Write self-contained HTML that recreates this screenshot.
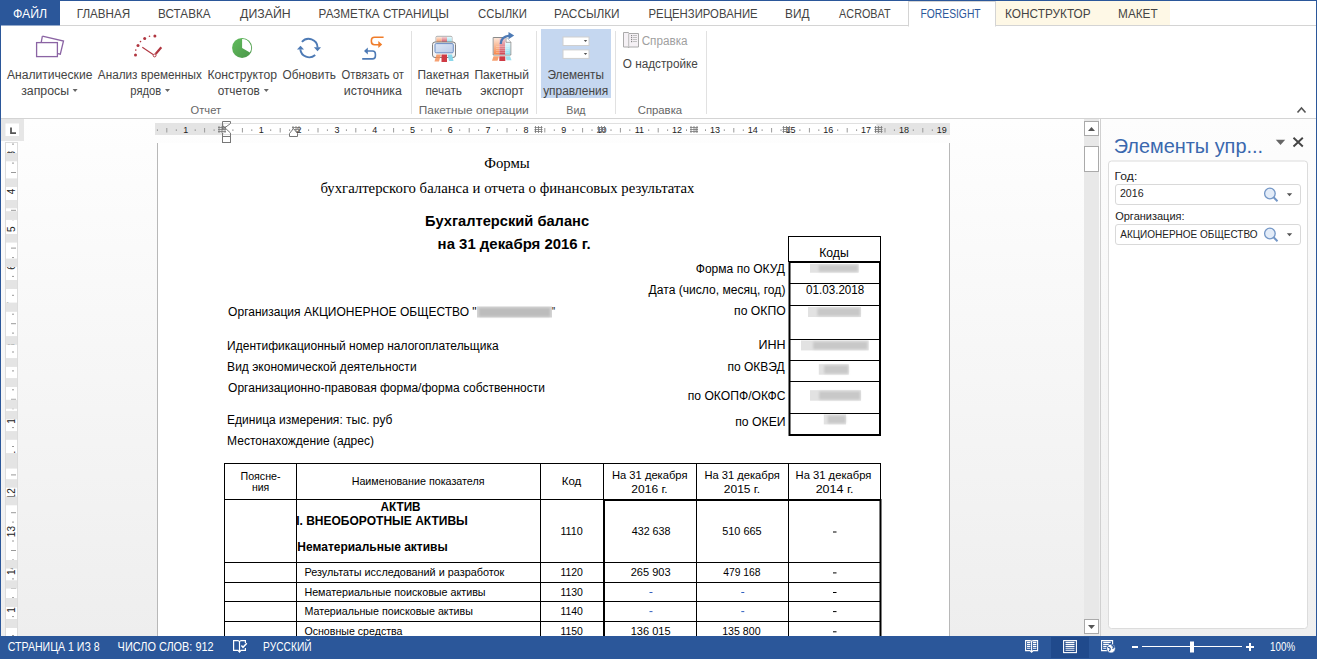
<!DOCTYPE html>
<html><head><meta charset="utf-8"><style>*{margin:0;padding:0}html,body{width:1317px;height:659px;overflow:hidden;background:#fff}svg{position:absolute;left:0;top:0;display:block}</style></head><body>
<svg width="1317" height="659" viewBox="0 0 1317 659">
<defs>
<linearGradient id="docg" x1="0" y1="0" x2="0" y2="1"><stop offset="0" stop-color="#fefefe"/><stop offset="1" stop-color="#eeeeee"/></linearGradient>
<linearGradient id="paneg" x1="0" y1="0" x2="0" y2="1"><stop offset="0" stop-color="#fdfdfd"/><stop offset="1" stop-color="#efefef"/></linearGradient>
<linearGradient id="pieg" x1="0" y1="0" x2="1" y2="1"><stop offset="0" stop-color="#62bd5e"/><stop offset="1" stop-color="#4a9548"/></linearGradient>
<linearGradient id="go" x1="0" y1="0" x2="0" y2="1"><stop offset="0" stop-color="#fde6d8"/><stop offset="1" stop-color="#f7874c"/></linearGradient>
<linearGradient id="gr" x1="0" y1="0" x2="0" y2="1"><stop offset="0" stop-color="#f2d0d3"/><stop offset="1" stop-color="#d04452"/></linearGradient>
<linearGradient id="gc" x1="0" y1="0" x2="0" y2="1"><stop offset="0" stop-color="#e4f9fd"/><stop offset="1" stop-color="#86dcf0"/></linearGradient>
<linearGradient id="gpan" x1="0" y1="0" x2="1" y2="1"><stop offset="0" stop-color="#dde7f6"/><stop offset="1" stop-color="#bccdea"/></linearGradient>
<filter id="blur" x="-20%" y="-50%" width="140%" height="200%"><feGaussianBlur stdDeviation="0.8"/></filter>
</defs>
<rect x="0" y="0" width="1317" height="659" fill="#fff"/>
<rect x="1" y="119" width="1099" height="517" fill="url(#docg)"/>
<rect x="1101" y="119" width="215" height="517" fill="url(#paneg)"/>
<rect x="0" y="0" width="60" height="25.5" fill="#2b579a"/>
<rect x="995" y="1" width="175" height="24" fill="#fef8e6"/>
<rect x="60" y="25" width="1256" height="1" fill="#d4d4d4"/>
<rect x="908.5" y="1.5" width="87" height="24.5" fill="#fff" stroke="#d4d4d4" stroke-width="1"/>
<rect x="909" y="25" width="86" height="2" fill="#fff"/>
<rect x="1" y="118" width="1315" height="1" fill="#d4d4d4"/>
<rect x="411.0" y="31" width="1" height="83" fill="#e1e1e1"/>
<rect x="536.0" y="31" width="1" height="83" fill="#e1e1e1"/>
<rect x="615.0" y="31" width="1" height="83" fill="#e1e1e1"/>
<rect x="706.0" y="31" width="1" height="83" fill="#e1e1e1"/>
<rect x="541" y="29" width="70" height="69" fill="#c5d7f0"/>
<path d="M72.6 89h5l-2.5 3z" fill="#666"/>
<path d="M165 89h5l-2.5 3z" fill="#666"/>
<path d="M263.8 89h5l-2.5 3z" fill="#666"/>
<path d="M1297.5 112.5l4-4.5 4 4.5" fill="none" stroke="#555" stroke-width="1.6"/>
<path d="M42.4 36.2 L63.5 41 L60.3 54.2 L57.8 53.6" fill="none" stroke="#8b64a4" stroke-width="1.3"/>
<path d="M41.2 42.6 L42.4 36.2" fill="none" stroke="#8b64a4" stroke-width="1.3"/>
<rect x="36.6" y="42.6" width="20.8" height="14" fill="#fff" stroke="#8b64a4" stroke-width="1.3"/>
<circle cx="135.5" cy="55.1" r="1.5" fill="#b0353f"/>
<circle cx="135.8" cy="50.1" r="0.8" fill="#b0353f"/>
<circle cx="138" cy="45.6" r="1.5" fill="#b0353f"/>
<circle cx="140.5" cy="41.6" r="0.8" fill="#b0353f"/>
<circle cx="144.7" cy="38.6" r="1.5" fill="#b0353f"/>
<circle cx="149.5" cy="36.3" r="0.8" fill="#b0353f"/>
<circle cx="154.9" cy="35.9" r="1.5" fill="#b0353f"/>
<path d="M142.3 47.2 L153.5 54.7" stroke="#b0353f" stroke-width="1.1" fill="none"/>
<path d="M155.6 54 L161.3 47.3" stroke="#b0353f" stroke-width="2.2" fill="none"/>
<circle cx="154.6" cy="55.5" r="1.4" fill="#fff" stroke="#b0353f" stroke-width="1"/>
<circle cx="242.1" cy="47.9" r="10" fill="url(#pieg)"/>
<path d="M242.1 47.9 L242.1 38.9 A9 9 0 0 1 249.9 52.4 Z" fill="#fff"/>
<path d="M301.9 41.9 A9 9 0 0 1 317.6 47.5" fill="none" stroke="#4d7ab5" stroke-width="1.9"/>
<path d="M313.9 47.3 L321 47.3 L317.5 51.3Z" fill="#4d7ab5"/>
<path d="M315.2 55 A9 9 0 0 1 300.3 49.3" fill="none" stroke="#4d7ab5" stroke-width="1.9"/>
<path d="M297 49.4 L304 49.4 L300.5 45.8Z" fill="#4d7ab5"/>
<path d="M383.6 37.2 H374.5 Q371.4 37.2 371.4 40.3 V41.6 Q371.4 44.7 374.5 44.7 H379" fill="none" stroke="#f07d2a" stroke-width="1.6"/>
<path d="M378.3 41 L382.2 44.6 L378.3 48Z" fill="#f07d2a"/>
<path d="M362.2 58.9 H372.5 Q375.4 58.9 375.4 56 V54 Q375.4 51 372.5 51 H367" fill="none" stroke="#4d7ab5" stroke-width="1.6"/>
<path d="M367.8 47.6 L364 51 L367.8 54.6Z" fill="#4d7ab5"/>
<rect x="436" y="36.3" width="16" height="7" rx="1" fill="#fff" stroke="#999" stroke-width=".8"/>
<rect x="436.5" y="37" width="5" height="6" fill="url(#go)"/><rect x="441.5" y="37" width="5.5" height="6" fill="url(#gr)"/><rect x="447" y="37" width="4.6" height="6" fill="url(#gc)"/>
<rect x="432.5" y="42" width="23" height="15.5" rx="2.5" fill="#f4f4f4" stroke="#808080" stroke-width="1"/>
<rect x="435" y="43.6" width="18.3" height="9.2" rx="1.2" fill="url(#gpan)" stroke="#6c8dc3" stroke-width="1"/>
<path d="M436.5 54.5h4.5l-2 7h-4.5z" fill="#f5915a" opacity=".85"/><rect x="441.5" y="54.5" width="5.5" height="7.5" fill="#cf3b45"/><path d="M447.5 54.5h4.5l1.5 6.5h-4.5z" fill="#8ad7ea"/>
<path d="M493.2 37.5 H506 L510.8 42.3 V55 H493.2Z" fill="#fff" stroke="#8a8a8a" stroke-width="1"/>
<rect x="493.8" y="38" width="5.5" height="16.5" fill="url(#go)"/><rect x="499.3" y="38" width="6" height="16.5" fill="url(#gr)"/><rect x="505.3" y="43" width="5" height="11.5" fill="url(#gc)"/>
<path d="M496 46.5h13M496 48.5h13M496 50.5h13M496 52.5h13" stroke="#fff" stroke-opacity=".35" stroke-width=".7"/>
<path d="M506 37.5 V42.3 H510.8" fill="#fff" stroke="#8a8a8a" stroke-width=".8"/>
<path d="M500.7 44 Q501 36.3 509.5 35.6" fill="none" stroke="#4d7ab5" stroke-width="2.2"/>
<path d="M508.5 32 L514.2 35.6 L508.5 39.2Z" fill="#4d7ab5"/>
<path d="M493.5 56.3h5.5l-1.5 4.5h-5.5z" fill="#f6a070"/><rect x="499.3" y="56.3" width="6" height="4.7" fill="#cf3b45"/><path d="M505.5 56.3h4.5l1.5 4h-5z" fill="#9fe0ef"/>
<rect x="563" y="37.0" width="26" height="8.5" fill="#fff" stroke="#cfcfcf" stroke-width="1"/>
<path d="M583.8 40.1h3.4l-1.7 2z" fill="#555"/>
<rect x="563" y="49.9" width="26" height="8.5" fill="#fff" stroke="#cfcfcf" stroke-width="1"/>
<path d="M583.8 53.0h3.4l-1.7 2z" fill="#555"/>
<path d="M623.5 32.5 H628.5 L629 33.5 H638.5 V47 H629 L628.6 47.8 L628 47 H623.5Z" fill="#f5f1f5" stroke="#aaa" stroke-width="1"/>
<path d="M628.7 33.5 V47" stroke="#bbb" stroke-width="1"/>
<rect x="631" y="35.0" width="1.2" height="1.2" fill="#888"/><rect x="633" y="35.1" width="4" height=".9" fill="#bbb"/>
<rect x="631" y="37.0" width="1.2" height="1.2" fill="#888"/><rect x="633" y="37.1" width="4" height=".9" fill="#bbb"/>
<rect x="631" y="39.0" width="1.2" height="1.2" fill="#888"/><rect x="633" y="39.1" width="4" height=".9" fill="#bbb"/>
<rect x="631" y="41.0" width="1.2" height="1.2" fill="#888"/><rect x="633" y="41.1" width="4" height=".9" fill="#bbb"/>
<rect x="1" y="119" width="23" height="22" fill="#e6e6e6"/>
<rect x="5.5" y="123.5" width="13.5" height="12.5" fill="#fff"/>
<path d="M11 127.5 V133.2 H16" fill="none" stroke="#555" stroke-width="1.8"/>
<rect x="155" y="123" width="795" height="12" fill="#e4e4e4"/>
<rect x="223.5" y="123.5" width="653.5" height="11" fill="#fff" stroke="#e0e0e0" stroke-width="1"/>
<rect x="156.9" y="129.3" width="1" height="1.7" fill="#999"/>
<rect x="166.3" y="128" width="1" height="4.5" fill="#999"/>
<rect x="175.8" y="129.3" width="1" height="1.7" fill="#999"/>
<rect x="194.7" y="129.3" width="1" height="1.7" fill="#999"/>
<rect x="204.1" y="128" width="1" height="4.5" fill="#999"/>
<rect x="213.6" y="129.3" width="1" height="1.7" fill="#999"/>
<rect x="232.4" y="129.3" width="1" height="1.7" fill="#999"/>
<rect x="241.9" y="128" width="1" height="4.5" fill="#999"/>
<rect x="251.3" y="129.3" width="1" height="1.7" fill="#999"/>
<rect x="270.2" y="129.3" width="1" height="1.7" fill="#999"/>
<rect x="279.7" y="128" width="1" height="4.5" fill="#999"/>
<rect x="289.1" y="129.3" width="1" height="1.7" fill="#999"/>
<rect x="308.1" y="129.3" width="1" height="1.7" fill="#999"/>
<rect x="317.5" y="128" width="1" height="4.5" fill="#999"/>
<rect x="326.9" y="129.3" width="1" height="1.7" fill="#999"/>
<rect x="345.9" y="129.3" width="1" height="1.7" fill="#999"/>
<rect x="355.3" y="128" width="1" height="4.5" fill="#999"/>
<rect x="364.8" y="129.3" width="1" height="1.7" fill="#999"/>
<rect x="383.6" y="129.3" width="1" height="1.7" fill="#999"/>
<rect x="393.1" y="128" width="1" height="4.5" fill="#999"/>
<rect x="402.5" y="129.3" width="1" height="1.7" fill="#999"/>
<rect x="421.4" y="129.3" width="1" height="1.7" fill="#999"/>
<rect x="430.9" y="128" width="1" height="4.5" fill="#999"/>
<rect x="440.4" y="129.3" width="1" height="1.7" fill="#999"/>
<rect x="459.2" y="129.3" width="1" height="1.7" fill="#999"/>
<rect x="468.7" y="128" width="1" height="4.5" fill="#999"/>
<rect x="478.1" y="129.3" width="1" height="1.7" fill="#999"/>
<rect x="497.0" y="129.3" width="1" height="1.7" fill="#999"/>
<rect x="506.5" y="128" width="1" height="4.5" fill="#999"/>
<rect x="516.0" y="129.3" width="1" height="1.7" fill="#999"/>
<rect x="534.8" y="129.3" width="1" height="1.7" fill="#999"/>
<rect x="544.3" y="128" width="1" height="4.5" fill="#999"/>
<rect x="553.8" y="129.3" width="1" height="1.7" fill="#999"/>
<rect x="572.6" y="129.3" width="1" height="1.7" fill="#999"/>
<rect x="582.1" y="128" width="1" height="4.5" fill="#999"/>
<rect x="591.5" y="129.3" width="1" height="1.7" fill="#999"/>
<rect x="610.5" y="129.3" width="1" height="1.7" fill="#999"/>
<rect x="619.9" y="128" width="1" height="4.5" fill="#999"/>
<rect x="629.3" y="129.3" width="1" height="1.7" fill="#999"/>
<rect x="648.2" y="129.3" width="1" height="1.7" fill="#999"/>
<rect x="657.7" y="128" width="1" height="4.5" fill="#999"/>
<rect x="667.1" y="129.3" width="1" height="1.7" fill="#999"/>
<rect x="686.0" y="129.3" width="1" height="1.7" fill="#999"/>
<rect x="695.5" y="128" width="1" height="4.5" fill="#999"/>
<rect x="705.0" y="129.3" width="1" height="1.7" fill="#999"/>
<rect x="723.8" y="129.3" width="1" height="1.7" fill="#999"/>
<rect x="733.3" y="128" width="1" height="4.5" fill="#999"/>
<rect x="742.8" y="129.3" width="1" height="1.7" fill="#999"/>
<rect x="761.6" y="129.3" width="1" height="1.7" fill="#999"/>
<rect x="771.1" y="128" width="1" height="4.5" fill="#999"/>
<rect x="780.5" y="129.3" width="1" height="1.7" fill="#999"/>
<rect x="799.4" y="129.3" width="1" height="1.7" fill="#999"/>
<rect x="808.9" y="128" width="1" height="4.5" fill="#999"/>
<rect x="818.3" y="129.3" width="1" height="1.7" fill="#999"/>
<rect x="837.2" y="129.3" width="1" height="1.7" fill="#999"/>
<rect x="846.7" y="128" width="1" height="4.5" fill="#999"/>
<rect x="856.1" y="129.3" width="1" height="1.7" fill="#999"/>
<rect x="875.0" y="129.3" width="1" height="1.7" fill="#999"/>
<rect x="884.5" y="128" width="1" height="4.5" fill="#999"/>
<rect x="893.9" y="129.3" width="1" height="1.7" fill="#999"/>
<rect x="912.8" y="129.3" width="1" height="1.7" fill="#999"/>
<rect x="922.3" y="128" width="1" height="4.5" fill="#999"/>
<rect x="931.8" y="129.3" width="1" height="1.7" fill="#999"/>
<text x="261.3" y="132.8" text-anchor="middle" style="font-family:'Liberation Sans';font-size:9px" fill="#222">1</text>
<text x="299.1" y="132.8" text-anchor="middle" style="font-family:'Liberation Sans';font-size:9px" fill="#222">2</text>
<text x="336.9" y="132.8" text-anchor="middle" style="font-family:'Liberation Sans';font-size:9px" fill="#222">3</text>
<text x="374.7" y="132.8" text-anchor="middle" style="font-family:'Liberation Sans';font-size:9px" fill="#222">4</text>
<text x="412.5" y="132.8" text-anchor="middle" style="font-family:'Liberation Sans';font-size:9px" fill="#222">5</text>
<text x="450.3" y="132.8" text-anchor="middle" style="font-family:'Liberation Sans';font-size:9px" fill="#222">6</text>
<text x="488.1" y="132.8" text-anchor="middle" style="font-family:'Liberation Sans';font-size:9px" fill="#222">7</text>
<text x="525.9" y="132.8" text-anchor="middle" style="font-family:'Liberation Sans';font-size:9px" fill="#222">8</text>
<text x="563.7" y="132.8" text-anchor="middle" style="font-family:'Liberation Sans';font-size:9px" fill="#222">9</text>
<text x="601.5" y="132.8" text-anchor="middle" style="font-family:'Liberation Sans';font-size:9px" fill="#222">10</text>
<text x="639.3" y="132.8" text-anchor="middle" style="font-family:'Liberation Sans';font-size:9px" fill="#222">11</text>
<text x="677.1" y="132.8" text-anchor="middle" style="font-family:'Liberation Sans';font-size:9px" fill="#222">12</text>
<text x="714.9" y="132.8" text-anchor="middle" style="font-family:'Liberation Sans';font-size:9px" fill="#222">13</text>
<text x="752.7" y="132.8" text-anchor="middle" style="font-family:'Liberation Sans';font-size:9px" fill="#222">14</text>
<text x="790.5" y="132.8" text-anchor="middle" style="font-family:'Liberation Sans';font-size:9px" fill="#222">15</text>
<text x="828.3" y="132.8" text-anchor="middle" style="font-family:'Liberation Sans';font-size:9px" fill="#222">16</text>
<text x="866.1" y="132.8" text-anchor="middle" style="font-family:'Liberation Sans';font-size:9px" fill="#222">17</text>
<text x="903.9" y="132.8" text-anchor="middle" style="font-family:'Liberation Sans';font-size:9px" fill="#222">18</text>
<text x="941.7" y="132.8" text-anchor="middle" style="font-family:'Liberation Sans';font-size:9px" fill="#222">19</text>
<text x="185.7" y="132.8" text-anchor="middle" style="font-family:'Liberation Sans';font-size:9px" fill="#222">1</text>
<g fill="none" stroke="#777" stroke-width=".8"><path d="M219 126v7M222 126v7M225 126v7M218 127.5h8M218 129.5h8M218 131.5h8"/></g>
<g fill="none" stroke="#777" stroke-width=".8"><path d="M293 126v7M296 126v7M299 126v7M292 127.5h8M292 129.5h8M292 131.5h8"/></g>
<g fill="none" stroke="#777" stroke-width=".8"><path d="M535.5 126v7M538.5 126v7M541.5 126v7M534.5 127.5h8M534.5 129.5h8M534.5 131.5h8"/></g>
<g fill="none" stroke="#777" stroke-width=".8"><path d="M598.5 126v7M601.5 126v7M604.5 126v7M597.5 127.5h8M597.5 129.5h8M597.5 131.5h8"/></g>
<g fill="none" stroke="#777" stroke-width=".8"><path d="M691 126v7M694 126v7M697 126v7M690 127.5h8M690 129.5h8M690 131.5h8"/></g>
<g fill="none" stroke="#777" stroke-width=".8"><path d="M783.5 126v7M786.5 126v7M789.5 126v7M782.5 127.5h8M782.5 129.5h8M782.5 131.5h8"/></g>
<g fill="none" stroke="#777" stroke-width=".8"><path d="M875.5 126v7M878.5 126v7M881.5 126v7M874.5 127.5h8M874.5 129.5h8M874.5 131.5h8"/></g>
<path d="M222.5 121.5 H230.5 V123.5 L222.5 129.5 Z" fill="none" stroke="#777" stroke-width="1"/>
<path d="M222.5 125.5 L230.5 133 V136.5 H222.5 V133" fill="none" stroke="#777" stroke-width="1"/>
<rect x="222.5" y="136.5" width="8" height="6" fill="#fff" stroke="#777" stroke-width="1"/>
<path d="M293.5 128.5 L297.5 133.5 V136.5 H289.5 V133.5Z" fill="#fff" stroke="#777" stroke-width="1"/>
<rect x="5.5" y="142.5" width="12" height="494" fill="#e4e4e4" stroke="#dcdcdc" stroke-width="1"/>
<rect x="6" y="143.0" width="11" height="10.0" fill="#fff"/>
<rect x="6" y="161.3" width="11" height="17.1" fill="#fff"/>
<rect x="6" y="187.0" width="11" height="13.0" fill="#fff"/>
<rect x="6" y="208.3" width="11" height="2.9" fill="#fff"/>
<rect x="6" y="219.9" width="11" height="14.1" fill="#fff"/>
<rect x="6" y="242.6" width="11" height="16.0" fill="#fff"/>
<rect x="6" y="266.9" width="11" height="13.1" fill="#fff"/>
<rect x="6" y="289.0" width="11" height="13.6" fill="#fff"/>
<rect x="6" y="311.8" width="11" height="24.3" fill="#fff"/>
<rect x="6" y="344.8" width="11" height="13.3" fill="#fff"/>
<rect x="6" y="366.9" width="11" height="11.2" fill="#fff"/>
<rect x="6" y="387.0" width="11" height="12.8" fill="#fff"/>
<rect x="6" y="408.8" width="11" height="2.1" fill="#fff"/>
<rect x="6" y="419.4" width="11" height="11.7" fill="#fff"/>
<rect x="6" y="439.8" width="11" height="13.3" fill="#fff"/>
<rect x="6" y="468.6" width="11" height="10.6" fill="#fff"/>
<rect x="6" y="487.7" width="11" height="8.8" fill="#fff"/>
<rect x="6" y="505.3" width="11" height="54.7" fill="#fff"/>
<rect x="6" y="568.6" width="11" height="11.7" fill="#fff"/>
<rect x="6" y="588.6" width="11" height="9.4" fill="#fff"/>
<rect x="6" y="607.0" width="11" height="12.0" fill="#fff"/>
<rect x="6" y="628.0" width="11" height="8.0" fill="#fff"/>
<clipPath id="vclip"><rect x="6" y="143.0" width="11" height="10.0"/><rect x="6" y="161.3" width="11" height="17.1"/><rect x="6" y="187.0" width="11" height="13.0"/><rect x="6" y="208.3" width="11" height="2.9"/><rect x="6" y="219.9" width="11" height="14.1"/><rect x="6" y="242.6" width="11" height="16.0"/><rect x="6" y="266.9" width="11" height="13.1"/><rect x="6" y="289.0" width="11" height="13.6"/><rect x="6" y="311.8" width="11" height="24.3"/><rect x="6" y="344.8" width="11" height="13.3"/><rect x="6" y="366.9" width="11" height="11.2"/><rect x="6" y="387.0" width="11" height="12.8"/><rect x="6" y="408.8" width="11" height="2.1"/><rect x="6" y="419.4" width="11" height="11.7"/><rect x="6" y="439.8" width="11" height="13.3"/><rect x="6" y="468.6" width="11" height="10.6"/><rect x="6" y="487.7" width="11" height="8.8"/><rect x="6" y="505.3" width="11" height="54.7"/><rect x="6" y="568.6" width="11" height="11.7"/><rect x="6" y="588.6" width="11" height="9.4"/><rect x="6" y="607.0" width="11" height="12.0"/><rect x="6" y="628.0" width="11" height="8.0"/></clipPath>
<g clip-path="url(#vclip)"><rect x="12" y="143.6" width="2" height="1" fill="#999"/><text x="11.7" y="153.6" transform="rotate(-90 11.7 153.6)" text-anchor="middle" dominant-baseline="central" style="font-family:'Liberation Sans';font-size:10px" fill="#222">3</text><rect x="12" y="162.6" width="2" height="1" fill="#999"/><rect x="11" y="172.0" width="5" height="1" fill="#999"/><rect x="12" y="181.4" width="2" height="1" fill="#999"/><text x="11.7" y="191.4" transform="rotate(-90 11.7 191.4)" text-anchor="middle" dominant-baseline="central" style="font-family:'Liberation Sans';font-size:10px" fill="#222">4</text><rect x="12" y="200.3" width="2" height="1" fill="#999"/><rect x="11" y="209.8" width="5" height="1" fill="#999"/><rect x="12" y="219.2" width="2" height="1" fill="#999"/><text x="11.7" y="229.2" transform="rotate(-90 11.7 229.2)" text-anchor="middle" dominant-baseline="central" style="font-family:'Liberation Sans';font-size:10px" fill="#222">5</text><rect x="12" y="238.1" width="2" height="1" fill="#999"/><rect x="11" y="247.6" width="5" height="1" fill="#999"/><rect x="12" y="257.1" width="2" height="1" fill="#999"/><text x="11.7" y="267.0" transform="rotate(-90 11.7 267.0)" text-anchor="middle" dominant-baseline="central" style="font-family:'Liberation Sans';font-size:10px" fill="#222">6</text><rect x="12" y="275.9" width="2" height="1" fill="#999"/><rect x="11" y="285.4" width="5" height="1" fill="#999"/><rect x="12" y="294.8" width="2" height="1" fill="#999"/><text x="11.7" y="304.8" transform="rotate(-90 11.7 304.8)" text-anchor="middle" dominant-baseline="central" style="font-family:'Liberation Sans';font-size:10px" fill="#222">7</text><rect x="12" y="313.7" width="2" height="1" fill="#999"/><rect x="11" y="323.2" width="5" height="1" fill="#999"/><rect x="12" y="332.6" width="2" height="1" fill="#999"/><text x="11.7" y="342.6" transform="rotate(-90 11.7 342.6)" text-anchor="middle" dominant-baseline="central" style="font-family:'Liberation Sans';font-size:10px" fill="#222">8</text><rect x="12" y="351.5" width="2" height="1" fill="#999"/><rect x="11" y="361.0" width="5" height="1" fill="#999"/><rect x="12" y="370.4" width="2" height="1" fill="#999"/><text x="11.7" y="380.4" transform="rotate(-90 11.7 380.4)" text-anchor="middle" dominant-baseline="central" style="font-family:'Liberation Sans';font-size:10px" fill="#222">9</text><rect x="12" y="389.3" width="2" height="1" fill="#999"/><rect x="11" y="398.8" width="5" height="1" fill="#999"/><rect x="12" y="408.2" width="2" height="1" fill="#999"/><text x="11.7" y="418.2" transform="rotate(-90 11.7 418.2)" text-anchor="middle" dominant-baseline="central" style="font-family:'Liberation Sans';font-size:10px" fill="#222">10</text><rect x="12" y="427.1" width="2" height="1" fill="#999"/><rect x="11" y="436.6" width="5" height="1" fill="#999"/><rect x="12" y="446.0" width="2" height="1" fill="#999"/><text x="11.7" y="456.0" transform="rotate(-90 11.7 456.0)" text-anchor="middle" dominant-baseline="central" style="font-family:'Liberation Sans';font-size:10px" fill="#222">11</text><rect x="12" y="464.9" width="2" height="1" fill="#999"/><rect x="11" y="474.4" width="5" height="1" fill="#999"/><rect x="12" y="483.8" width="2" height="1" fill="#999"/><text x="11.7" y="493.8" transform="rotate(-90 11.7 493.8)" text-anchor="middle" dominant-baseline="central" style="font-family:'Liberation Sans';font-size:10px" fill="#222">12</text><rect x="12" y="502.7" width="2" height="1" fill="#999"/><rect x="11" y="512.2" width="5" height="1" fill="#999"/><rect x="12" y="521.6" width="2" height="1" fill="#999"/><text x="11.7" y="531.6" transform="rotate(-90 11.7 531.6)" text-anchor="middle" dominant-baseline="central" style="font-family:'Liberation Sans';font-size:10px" fill="#222">13</text><rect x="12" y="540.5" width="2" height="1" fill="#999"/><rect x="11" y="550.0" width="5" height="1" fill="#999"/><rect x="12" y="559.5" width="2" height="1" fill="#999"/><text x="11.7" y="569.4" transform="rotate(-90 11.7 569.4)" text-anchor="middle" dominant-baseline="central" style="font-family:'Liberation Sans';font-size:10px" fill="#222">14</text><rect x="12" y="578.4" width="2" height="1" fill="#999"/><rect x="11" y="587.8" width="5" height="1" fill="#999"/><rect x="12" y="597.2" width="2" height="1" fill="#999"/><text x="11.7" y="607.2" transform="rotate(-90 11.7 607.2)" text-anchor="middle" dominant-baseline="central" style="font-family:'Liberation Sans';font-size:10px" fill="#222">15</text><rect x="12" y="616.1" width="2" height="1" fill="#999"/><rect x="11" y="625.6" width="5" height="1" fill="#999"/><rect x="12" y="635.0" width="2" height="1" fill="#999"/></g>
<rect x="157" y="143" width="792.5" height="493" fill="#fff"/>
<rect x="157" y="143" width="1" height="493" fill="#b8b8b8"/>
<rect x="949" y="143" width="1" height="493" fill="#b8b8b8"/>
<rect x="788.5" y="236.5" width="92" height="25" fill="none" stroke="#000" stroke-width="1"/>
<rect x="789.5" y="262" width="90.5" height="173" fill="none" stroke="#000" stroke-width="2"/>
<rect x="790" y="283.0" width="90" height="1" fill="#000"/>
<rect x="790" y="305.0" width="90" height="1" fill="#000"/>
<rect x="790" y="339.0" width="90" height="1" fill="#000"/>
<rect x="790" y="360.0" width="90" height="1" fill="#000"/>
<rect x="790" y="381.0" width="90" height="1" fill="#000"/>
<rect x="790" y="413.0" width="90" height="1" fill="#000"/>
<rect x="810.0" y="264.0" width="48.7" height="8.7" fill="#e2e2e2"/>
<rect x="818.8" y="265.2" width="39.0" height="6.3" fill="#c8c8c8" filter="url(#blur)"/>
<rect x="808.0" y="307.0" width="53.0" height="10.0" fill="#e2e2e2"/>
<rect x="817.5" y="308.2" width="42.4" height="7.6" fill="#c8c8c8" filter="url(#blur)"/>
<rect x="801.0" y="340.5" width="67.7" height="9.9" fill="#e2e2e2"/>
<rect x="813.2" y="341.7" width="54.2" height="7.5" fill="#c8c8c8" filter="url(#blur)"/>
<rect x="818.8" y="364.2" width="30.0" height="10.5" fill="#e2e2e2"/>
<rect x="824.2" y="365.4" width="24.0" height="8.1" fill="#c8c8c8" filter="url(#blur)"/>
<rect x="810.0" y="390.2" width="51.0" height="10.5" fill="#e2e2e2"/>
<rect x="819.2" y="391.4" width="40.8" height="8.1" fill="#c8c8c8" filter="url(#blur)"/>
<rect x="823.8" y="414.5" width="22.2" height="9.9" fill="#e2e2e2"/>
<rect x="827.8" y="415.7" width="17.8" height="7.5" fill="#c8c8c8" filter="url(#blur)"/>
<rect x="477" y="306.5" width="75" height="11" fill="#d4d4d4"/>
<rect x="479" y="308" width="71" height="8.5" fill="#bcbcbc" filter="url(#blur)"/>
<rect x="224" y="463" width="657" height="1" fill="#000"/>
<rect x="224" y="463" width="1" height="173" fill="#000"/>
<rect x="296" y="463" width="1" height="173" fill="#000"/>
<rect x="540" y="463" width="1" height="173" fill="#000"/>
<rect x="603" y="463" width="1" height="173" fill="#000"/>
<rect x="696" y="463" width="1" height="173" fill="#000"/>
<rect x="788" y="463" width="1" height="173" fill="#000"/>
<rect x="880" y="463" width="1" height="37" fill="#000"/>
<rect x="879.5" y="499" width="2" height="137" fill="#000"/>
<rect x="603" y="499" width="2" height="137" fill="#000"/>
<rect x="224" y="499" width="380" height="1" fill="#000"/>
<rect x="603" y="499" width="278" height="2" fill="#000"/>
<rect x="224" y="562" width="657" height="1" fill="#000"/>
<rect x="224" y="582" width="657" height="1" fill="#000"/>
<rect x="224" y="601" width="657" height="1" fill="#000"/>
<rect x="224" y="621" width="657" height="1" fill="#000"/>
<rect x="833" y="531.5" width="3.5" height="1" fill="#000"/>
<rect x="833" y="572.4" width="3.5" height="1" fill="#000"/>
<rect x="833" y="592.0" width="3.5" height="1" fill="#000"/>
<rect x="833" y="611.1" width="3.5" height="1" fill="#000"/>
<rect x="833" y="631.3" width="3.5" height="1" fill="#000"/>
<rect x="649.5" y="592.0" width="3" height="1" fill="#3060c0"/>
<rect x="741.3" y="592.0" width="3" height="1" fill="#3060c0"/>
<rect x="649.5" y="611.1" width="3" height="1" fill="#3060c0"/>
<rect x="741.3" y="611.1" width="3" height="1" fill="#3060c0"/>
<rect x="1084" y="119" width="15" height="517" fill="#e8e8e8"/>
<rect x="1084.5" y="121.5" width="14" height="14" fill="#fff" stroke="#aaa" stroke-width="1"/>
<path d="M1088 131 L1091.5 127 L1095 131Z" fill="#555"/>
<rect x="1084.5" y="146.5" width="14" height="25" fill="#fff" stroke="#aaa" stroke-width="1"/>
<rect x="1084.5" y="619.5" width="14" height="14" fill="#fff" stroke="#aaa" stroke-width="1"/>
<path d="M1088 625 L1091.5 629 L1095 625Z" fill="#555"/>
<rect x="1100" y="119" width="1" height="517" fill="#d0d0d0"/>
<rect x="1108.5" y="161" width="199" height="467.5" rx="3" fill="#fff" stroke="#dcdcdc" stroke-width="1"/>
<path d="M1275.8 139.8 H1285.2 L1280.5 145Z" fill="#666"/>
<path d="M1293.5 137.8 L1302.8 146.5 M1302.8 137.8 L1293.5 146.5" stroke="#444" stroke-width="1.9"/>
<rect x="1115.5" y="184.5" width="185" height="20" rx="2.5" fill="#fff" stroke="#d9d9d9" stroke-width="1"/>
<circle cx="1269.9" cy="193.5" r="5.3" fill="#e3ecf8" stroke="#7396c6" stroke-width="1.3"/>
<path d="M1273.6 197.3 L1277.5 201.3" stroke="#7396c6" stroke-width="2"/>
<path d="M1286.8 193.3 H1292.2 L1289.5 196.3Z" fill="#555"/>
<rect x="1115.5" y="224.5" width="185" height="20" rx="2.5" fill="#fff" stroke="#d9d9d9" stroke-width="1"/>
<circle cx="1269.9" cy="233.5" r="5.3" fill="#e3ecf8" stroke="#7396c6" stroke-width="1.3"/>
<path d="M1273.6 237.3 L1277.5 241.3" stroke="#7396c6" stroke-width="2"/>
<path d="M1286.8 233.3 H1292.2 L1289.5 236.3Z" fill="#555"/>
<text x="12.92" y="18.00" textLength="34.20" lengthAdjust="spacingAndGlyphs" style="font-family:'Liberation Sans';font-size:12.5px;font-weight:normal" fill="#fff">ФАЙЛ</text>
<text x="76.82" y="18.00" textLength="53.30" lengthAdjust="spacingAndGlyphs" style="font-family:'Liberation Sans';font-size:12.5px;font-weight:normal" fill="#444">ГЛАВНАЯ</text>
<text x="158.12" y="18.00" textLength="52.50" lengthAdjust="spacingAndGlyphs" style="font-family:'Liberation Sans';font-size:12.5px;font-weight:normal" fill="#444">ВСТАВКА</text>
<text x="240.12" y="18.00" textLength="50.50" lengthAdjust="spacingAndGlyphs" style="font-family:'Liberation Sans';font-size:12.5px;font-weight:normal" fill="#444">ДИЗАЙН</text>
<text x="318.62" y="18.00" textLength="130.20" lengthAdjust="spacingAndGlyphs" style="font-family:'Liberation Sans';font-size:12.5px;font-weight:normal" fill="#444">РАЗМЕТКА СТРАНИЦЫ</text>
<text x="478.12" y="18.00" textLength="48.80" lengthAdjust="spacingAndGlyphs" style="font-family:'Liberation Sans';font-size:12.5px;font-weight:normal" fill="#444">ССЫЛКИ</text>
<text x="554.12" y="18.00" textLength="65.50" lengthAdjust="spacingAndGlyphs" style="font-family:'Liberation Sans';font-size:12.5px;font-weight:normal" fill="#444">РАССЫЛКИ</text>
<text x="648.53" y="18.00" textLength="109.10" lengthAdjust="spacingAndGlyphs" style="font-family:'Liberation Sans';font-size:12.5px;font-weight:normal" fill="#444">РЕЦЕНЗИРОВАНИЕ</text>
<text x="785.12" y="18.00" textLength="24.50" lengthAdjust="spacingAndGlyphs" style="font-family:'Liberation Sans';font-size:12.5px;font-weight:normal" fill="#444">ВИД</text>
<text x="839.12" y="18.00" textLength="51.50" lengthAdjust="spacingAndGlyphs" style="font-family:'Liberation Sans';font-size:12.5px;font-weight:normal" fill="#444">ACROBAT</text>
<text x="920.53" y="18.00" textLength="60.10" lengthAdjust="spacingAndGlyphs" style="font-family:'Liberation Sans';font-size:12.5px;font-weight:normal" fill="#2b579a">FORESIGHT</text>
<text x="1005.12" y="18.00" textLength="85.50" lengthAdjust="spacingAndGlyphs" style="font-family:'Liberation Sans';font-size:12.5px;font-weight:normal" fill="#444">КОНСТРУКТОР</text>
<text x="1118.12" y="18.00" textLength="39.50" lengthAdjust="spacingAndGlyphs" style="font-family:'Liberation Sans';font-size:12.5px;font-weight:normal" fill="#444">МАКЕТ</text>
<text x="6.96" y="79.00" textLength="85.44" lengthAdjust="spacingAndGlyphs" style="font-family:'Liberation Sans';font-size:12px;font-weight:normal" fill="#444">Аналитические</text>
<text x="21.16" y="95.00" textLength="47.84" lengthAdjust="spacingAndGlyphs" style="font-family:'Liberation Sans';font-size:12px;font-weight:normal" fill="#444">запросы</text>
<text x="97.86" y="79.00" textLength="103.94" lengthAdjust="spacingAndGlyphs" style="font-family:'Liberation Sans';font-size:12px;font-weight:normal" fill="#444">Анализ временных</text>
<text x="130.36" y="95.00" textLength="30.84" lengthAdjust="spacingAndGlyphs" style="font-family:'Liberation Sans';font-size:12px;font-weight:normal" fill="#444">рядов</text>
<text x="207.46" y="79.00" textLength="69.54" lengthAdjust="spacingAndGlyphs" style="font-family:'Liberation Sans';font-size:12px;font-weight:normal" fill="#444">Конструктор</text>
<text x="217.66" y="95.00" textLength="42.14" lengthAdjust="spacingAndGlyphs" style="font-family:'Liberation Sans';font-size:12px;font-weight:normal" fill="#444">отчетов</text>
<text x="282.56" y="79.00" textLength="53.44" lengthAdjust="spacingAndGlyphs" style="font-family:'Liberation Sans';font-size:12px;font-weight:normal" fill="#444">Обновить</text>
<text x="341.56" y="79.00" textLength="62.24" lengthAdjust="spacingAndGlyphs" style="font-family:'Liberation Sans';font-size:12px;font-weight:normal" fill="#444">Отвязать от</text>
<text x="343.86" y="95.00" textLength="58.04" lengthAdjust="spacingAndGlyphs" style="font-family:'Liberation Sans';font-size:12px;font-weight:normal" fill="#444">источника</text>
<text x="417.56" y="79.00" textLength="51.54" lengthAdjust="spacingAndGlyphs" style="font-family:'Liberation Sans';font-size:12px;font-weight:normal" fill="#444">Пакетная</text>
<text x="425.46" y="95.00" textLength="36.54" lengthAdjust="spacingAndGlyphs" style="font-family:'Liberation Sans';font-size:12px;font-weight:normal" fill="#444">печать</text>
<text x="474.46" y="79.00" textLength="54.54" lengthAdjust="spacingAndGlyphs" style="font-family:'Liberation Sans';font-size:12px;font-weight:normal" fill="#444">Пакетный</text>
<text x="480.16" y="95.00" textLength="43.64" lengthAdjust="spacingAndGlyphs" style="font-family:'Liberation Sans';font-size:12px;font-weight:normal" fill="#444">экспорт</text>
<text x="547.46" y="79.00" textLength="56.54" lengthAdjust="spacingAndGlyphs" style="font-family:'Liberation Sans';font-size:12px;font-weight:normal" fill="#444">Элементы</text>
<text x="543.16" y="95.00" textLength="64.94" lengthAdjust="spacingAndGlyphs" style="font-family:'Liberation Sans';font-size:12px;font-weight:normal" fill="#444">управления</text>
<text x="641.66" y="45.00" textLength="45.94" lengthAdjust="spacingAndGlyphs" style="font-family:'Liberation Sans';font-size:12px;font-weight:normal" fill="#a0a0a0">Справка</text>
<text x="622.86" y="68.00" textLength="74.94" lengthAdjust="spacingAndGlyphs" style="font-family:'Liberation Sans';font-size:12px;font-weight:normal" fill="#444">О надстройке</text>
<text x="190.63" y="113.70" textLength="30.42" lengthAdjust="spacingAndGlyphs" style="font-family:'Liberation Sans';font-size:11px;font-weight:normal" fill="#666">Отчет</text>
<text x="418.83" y="113.70" textLength="109.92" lengthAdjust="spacingAndGlyphs" style="font-family:'Liberation Sans';font-size:11px;font-weight:normal" fill="#666">Пакетные операции</text>
<text x="566.33" y="113.70" textLength="19.22" lengthAdjust="spacingAndGlyphs" style="font-family:'Liberation Sans';font-size:11px;font-weight:normal" fill="#666">Вид</text>
<text x="637.73" y="113.70" textLength="44.42" lengthAdjust="spacingAndGlyphs" style="font-family:'Liberation Sans';font-size:11px;font-weight:normal" fill="#666">Справка</text>
<text x="1113.63" y="152.60" textLength="149.42" lengthAdjust="spacingAndGlyphs" style="font-family:'Liberation Sans';font-size:21px;font-weight:normal" fill="#3a68ae">Элементы упр...</text>
<text x="1114.63" y="179.90" textLength="22.62" lengthAdjust="spacingAndGlyphs" style="font-family:'Liberation Sans';font-size:11px;font-weight:normal" fill="#222">Год:</text>
<text x="1119.93" y="197.30" textLength="23.62" lengthAdjust="spacingAndGlyphs" style="font-family:'Liberation Sans';font-size:11px;font-weight:normal" fill="#222">2016</text>
<text x="1115.23" y="220.00" textLength="69.32" lengthAdjust="spacingAndGlyphs" style="font-family:'Liberation Sans';font-size:11px;font-weight:normal" fill="#222">Организация:</text>
<text x="1120.23" y="238.00" textLength="137.32" lengthAdjust="spacingAndGlyphs" style="font-family:'Liberation Sans';font-size:11px;font-weight:normal" fill="#222">АКЦИОНЕРНОЕ ОБЩЕСТВО</text>
<text x="484.22" y="167.50" textLength="45.58" lengthAdjust="spacingAndGlyphs" style="font-family:'Liberation Serif';font-size:14px;font-weight:normal" fill="#000">Формы</text>
<text x="320.42" y="192.60" textLength="374.08" lengthAdjust="spacingAndGlyphs" style="font-family:'Liberation Serif';font-size:14px;font-weight:normal" fill="#000">бухгалтерского баланса и отчета о финансовых результатах</text>
<text x="425.12" y="225.60" textLength="163.98" lengthAdjust="spacingAndGlyphs" style="font-family:'Liberation Sans';font-size:14px;font-weight:bold" fill="#000">Бухгалтерский баланс</text>
<text x="437.62" y="249.30" textLength="153.08" lengthAdjust="spacingAndGlyphs" style="font-family:'Liberation Sans';font-size:14px;font-weight:bold" fill="#000">на 31 декабря 2016 г.</text>
<text x="819.16" y="256.60" textLength="29.64" lengthAdjust="spacingAndGlyphs" style="font-family:'Liberation Sans';font-size:12px;font-weight:normal" fill="#000">Коды</text>
<text x="695.72" y="272.70" textLength="89.30" lengthAdjust="spacingAndGlyphs" style="font-family:'Liberation Sans';font-size:12.5px;font-weight:normal" fill="#000">Форма по ОКУД</text>
<text x="648.62" y="293.60" textLength="136.80" lengthAdjust="spacingAndGlyphs" style="font-family:'Liberation Sans';font-size:12.5px;font-weight:normal" fill="#000">Дата (число, месяц, год)</text>
<text x="806.12" y="293.60" textLength="58.10" lengthAdjust="spacingAndGlyphs" style="font-family:'Liberation Sans';font-size:12.5px;font-weight:normal" fill="#000">01.03.2018</text>
<text x="734.12" y="315.40" textLength="51.50" lengthAdjust="spacingAndGlyphs" style="font-family:'Liberation Sans';font-size:12.5px;font-weight:normal" fill="#000">по ОКПО</text>
<text x="758.53" y="349.40" textLength="27.10" lengthAdjust="spacingAndGlyphs" style="font-family:'Liberation Sans';font-size:12.5px;font-weight:normal" fill="#000">ИНН</text>
<text x="727.43" y="371.30" textLength="57.20" lengthAdjust="spacingAndGlyphs" style="font-family:'Liberation Sans';font-size:12.5px;font-weight:normal" fill="#000">по ОКВЭД</text>
<text x="687.72" y="399.70" textLength="97.90" lengthAdjust="spacingAndGlyphs" style="font-family:'Liberation Sans';font-size:12.5px;font-weight:normal" fill="#000">по ОКОПФ/ОКФС</text>
<text x="735.22" y="426.30" textLength="50.40" lengthAdjust="spacingAndGlyphs" style="font-family:'Liberation Sans';font-size:12.5px;font-weight:normal" fill="#000">по ОКЕИ</text>
<text x="228.12" y="316.30" textLength="248.50" lengthAdjust="spacingAndGlyphs" style="font-family:'Liberation Sans';font-size:12.5px;font-weight:normal" fill="#000">Организация АКЦИОНЕРНОЕ ОБЩЕСТВО &quot;</text>
<text x="552.12" y="316.30" textLength="3.10" lengthAdjust="spacingAndGlyphs" style="font-family:'Liberation Sans';font-size:12.5px;font-weight:normal" fill="#000">&quot;</text>
<text x="227.12" y="349.50" textLength="271.50" lengthAdjust="spacingAndGlyphs" style="font-family:'Liberation Sans';font-size:12.5px;font-weight:normal" fill="#000">Идентификационный номер налогоплательщика</text>
<text x="227.12" y="370.70" textLength="189.50" lengthAdjust="spacingAndGlyphs" style="font-family:'Liberation Sans';font-size:12.5px;font-weight:normal" fill="#000">Вид экономической деятельности</text>
<text x="228.12" y="392.00" textLength="316.80" lengthAdjust="spacingAndGlyphs" style="font-family:'Liberation Sans';font-size:12.5px;font-weight:normal" fill="#000">Организационно-правовая форма/форма собственности</text>
<text x="227.12" y="423.90" textLength="165.30" lengthAdjust="spacingAndGlyphs" style="font-family:'Liberation Sans';font-size:12.5px;font-weight:normal" fill="#000">Единица измерения: тыс. руб</text>
<text x="227.12" y="445.00" textLength="146.90" lengthAdjust="spacingAndGlyphs" style="font-family:'Liberation Sans';font-size:12.5px;font-weight:normal" fill="#000">Местонахождение (адрес)</text>
<text x="240.50" y="479.70" textLength="40.00" lengthAdjust="spacingAndGlyphs" style="font-family:'Liberation Sans';font-size:10px;font-weight:normal" fill="#000">Поясне-</text>
<text x="252.00" y="490.70" textLength="17.30" lengthAdjust="spacingAndGlyphs" style="font-family:'Liberation Sans';font-size:10px;font-weight:normal" fill="#000">ния</text>
<text x="351.67" y="485.00" textLength="132.86" lengthAdjust="spacingAndGlyphs" style="font-family:'Liberation Sans';font-size:10.5px;font-weight:normal" fill="#000">Наименование показателя</text>
<text x="561.73" y="485.30" textLength="19.52" lengthAdjust="spacingAndGlyphs" style="font-family:'Liberation Sans';font-size:11px;font-weight:normal" fill="#000">Код</text>
<text x="612.00" y="478.90" textLength="75.48" lengthAdjust="spacingAndGlyphs" style="font-family:'Liberation Sans';font-size:11.5px;font-weight:normal" fill="#000">На 31 декабря</text>
<text x="631.39" y="492.90" textLength="36.28" lengthAdjust="spacingAndGlyphs" style="font-family:'Liberation Sans';font-size:11.5px;font-weight:normal" fill="#000">2016 г.</text>
<text x="704.39" y="478.90" textLength="75.48" lengthAdjust="spacingAndGlyphs" style="font-family:'Liberation Sans';font-size:11.5px;font-weight:normal" fill="#000">На 31 декабря</text>
<text x="723.79" y="492.90" textLength="36.28" lengthAdjust="spacingAndGlyphs" style="font-family:'Liberation Sans';font-size:11.5px;font-weight:normal" fill="#000">2015 г.</text>
<text x="795.60" y="478.90" textLength="75.78" lengthAdjust="spacingAndGlyphs" style="font-family:'Liberation Sans';font-size:11.5px;font-weight:normal" fill="#000">На 31 декабря</text>
<text x="815.70" y="492.90" textLength="37.68" lengthAdjust="spacingAndGlyphs" style="font-family:'Liberation Sans';font-size:11.5px;font-weight:normal" fill="#000">2014 г.</text>
<text x="380.56" y="510.60" textLength="40.04" lengthAdjust="spacingAndGlyphs" style="font-family:'Liberation Sans';font-size:12px;font-weight:bold" fill="#000">АКТИВ</text>
<text x="296.16" y="524.60" textLength="171.74" lengthAdjust="spacingAndGlyphs" style="font-family:'Liberation Sans';font-size:12px;font-weight:bold" fill="#000">I. ВНЕОБОРОТНЫЕ АКТИВЫ</text>
<text x="297.36" y="551.30" textLength="150.34" lengthAdjust="spacingAndGlyphs" style="font-family:'Liberation Sans';font-size:12px;font-weight:bold" fill="#000">Нематериальные активы</text>
<text x="304.43" y="575.70" textLength="199.92" lengthAdjust="spacingAndGlyphs" style="font-family:'Liberation Sans';font-size:11px;font-weight:normal" fill="#000">Результаты исследований и разработок</text>
<text x="304.43" y="595.90" textLength="181.12" lengthAdjust="spacingAndGlyphs" style="font-family:'Liberation Sans';font-size:11px;font-weight:normal" fill="#000">Нематериальные поисковые активы</text>
<text x="304.43" y="615.00" textLength="168.42" lengthAdjust="spacingAndGlyphs" style="font-family:'Liberation Sans';font-size:11px;font-weight:normal" fill="#000">Материальные поисковые активы</text>
<text x="304.43" y="634.70" textLength="98.12" lengthAdjust="spacingAndGlyphs" style="font-family:'Liberation Sans';font-size:11px;font-weight:normal" fill="#000">Основные средства</text>
<text x="560.39" y="535.30" textLength="22.48" lengthAdjust="spacingAndGlyphs" style="font-family:'Liberation Sans';font-size:11.5px;font-weight:normal" fill="#000">1110</text>
<text x="631.70" y="535.30" textLength="38.88" lengthAdjust="spacingAndGlyphs" style="font-family:'Liberation Sans';font-size:11.5px;font-weight:normal" fill="#000">432 638</text>
<text x="722.20" y="535.30" textLength="39.38" lengthAdjust="spacingAndGlyphs" style="font-family:'Liberation Sans';font-size:11.5px;font-weight:normal" fill="#000">510 665</text>
<text x="560.39" y="575.70" textLength="22.48" lengthAdjust="spacingAndGlyphs" style="font-family:'Liberation Sans';font-size:11.5px;font-weight:normal" fill="#000">1120</text>
<text x="630.70" y="575.70" textLength="39.88" lengthAdjust="spacingAndGlyphs" style="font-family:'Liberation Sans';font-size:11.5px;font-weight:normal" fill="#000">265 903</text>
<text x="723.20" y="575.70" textLength="37.38" lengthAdjust="spacingAndGlyphs" style="font-family:'Liberation Sans';font-size:11.5px;font-weight:normal" fill="#000">479 168</text>
<text x="560.39" y="595.90" textLength="22.48" lengthAdjust="spacingAndGlyphs" style="font-family:'Liberation Sans';font-size:11.5px;font-weight:normal" fill="#000">1130</text>
<text x="560.39" y="615.00" textLength="22.48" lengthAdjust="spacingAndGlyphs" style="font-family:'Liberation Sans';font-size:11.5px;font-weight:normal" fill="#000">1140</text>
<text x="560.39" y="634.70" textLength="22.48" lengthAdjust="spacingAndGlyphs" style="font-family:'Liberation Sans';font-size:11.5px;font-weight:normal" fill="#000">1150</text>
<text x="630.70" y="634.70" textLength="39.88" lengthAdjust="spacingAndGlyphs" style="font-family:'Liberation Sans';font-size:11.5px;font-weight:normal" fill="#000">136 015</text>
<text x="722.20" y="634.70" textLength="38.38" lengthAdjust="spacingAndGlyphs" style="font-family:'Liberation Sans';font-size:11.5px;font-weight:normal" fill="#000">135 800</text>
<rect x="0" y="636" width="1317" height="23" fill="#2b579a"/>
<rect x="1051" y="637" width="38" height="21" fill="#204a8c"/>
<g fill="none" stroke="#fff" stroke-width="1.1"><path d="M1031.6 641 L1029.5 640.6 H1025.6 V650.6 H1030 L1031.6 652.2 L1033.2 650.6 H1037.6 V640.6 H1033.7 Z M1031.6 641 V652"/><path d="M1027 642.4h3.4M1027 644.4h3.4M1027 646.4h3.4M1027 648.3h3.4M1033 642.4h3.4M1033 644.4h3.4M1033 646.4h3.4M1033 648.3h3.4"/></g>
<g fill="none" stroke="#fff" stroke-width="1.1"><rect x="1063.6" y="640.6" width="12.8" height="12"/><path d="M1065.5 642.4h9M1065.5 644.4h9M1065.5 646.4h9M1065.5 648.3h9M1065.5 650.3h9"/></g>
<g fill="none" stroke="#fff" stroke-width="1.1"><path d="M1107 650.6 H1101.6 V640.6 H1112.6 V644.5"/><path d="M1103.2 642.4h7.5M1103.2 644.4h6M1103.2 646.4h3.5M1103.2 648.3h3"/></g><circle cx="1111" cy="648.6" r="4.3" fill="#fff" stroke="#2b579a" stroke-width=".6"/><path d="M1108 647.5 q1.5 -0.5 2.2 1 q0.3 1.5 -1 2.5 M1111.5 645.5 q1.5 0 2.5 1.5 q-0.5 1.5 -1.8 1" fill="none" stroke="#2b579a" stroke-width="1.3"/>
<g fill="none" stroke="#fff" stroke-width="1.2"><path d="M239.5 641.5 L238 640.6 H233.6 V650.4 H238 L239.5 652 L241 650.4 H245.4 V648"/><path d="M245.4 643 V640.6 H241 L239.5 641.5 V651.5"/><path d="M241.4 645.6 L243 647.3 L246.8 643.3" stroke-width="1.5"/></g>
<rect x="1132" y="646" width="6" height="2" fill="#fff"/>
<rect x="1142" y="646" width="100" height="1" fill="#fff"/>
<rect x="1190" y="641.5" width="4" height="11" fill="#fff"/>
<path d="M1246 647h8M1250 643v8" stroke="#fff" stroke-width="2"/>
<rect x="0" y="0" width="1317" height="1" fill="#2b579a"/>
<rect x="0" y="0" width="1" height="659" fill="#2b579a"/>
<rect x="1316" y="0" width="1" height="659" fill="#2b579a"/>
<text x="7.83" y="651.30" textLength="91.80" lengthAdjust="spacingAndGlyphs" style="font-family:'Liberation Sans';font-size:12.5px;font-weight:normal" fill="#fff">СТРАНИЦА 1 ИЗ 8</text>
<text x="117.62" y="651.30" textLength="96.00" lengthAdjust="spacingAndGlyphs" style="font-family:'Liberation Sans';font-size:12.5px;font-weight:normal" fill="#fff">ЧИСЛО СЛОВ: 912</text>
<text x="263.12" y="651.30" textLength="48.50" lengthAdjust="spacingAndGlyphs" style="font-family:'Liberation Sans';font-size:12.5px;font-weight:normal" fill="#fff">РУССКИЙ</text>
<text x="1270.12" y="651.30" textLength="25.00" lengthAdjust="spacingAndGlyphs" style="font-family:'Liberation Sans';font-size:12.5px;font-weight:normal" fill="#fff">100%</text>
</svg></body></html>
